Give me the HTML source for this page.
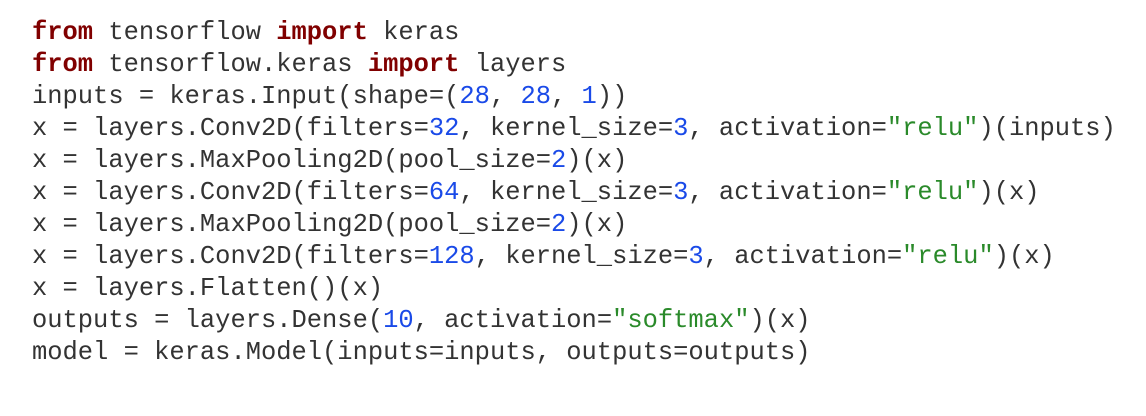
<!DOCTYPE html>
<html><head><style>
body{margin:0;background:#fff;width:1146px;height:416px;overflow:hidden}
pre{margin:0;position:absolute;left:32px;top:17px;font-family:"Liberation Mono",monospace;font-size:25.45px;line-height:32px;color:#333}
b{color:#800000}
.n{color:#1a4ae8}
.s{color:#2a8a2a}
</style></head><body>
<pre><b>from</b> tensorflow <b>import</b> keras
<b>from</b> tensorflow.keras <b>import</b> layers
inputs = keras.Input(shape=(<span class="n">28</span>, <span class="n">28</span>, <span class="n">1</span>))
x = layers.Conv2D(filters=<span class="n">32</span>, kernel_size=<span class="n">3</span>, activation=<span class="s">"relu"</span>)(inputs)
x = layers.MaxPooling2D(pool_size=<span class="n">2</span>)(x)
x = layers.Conv2D(filters=<span class="n">64</span>, kernel_size=<span class="n">3</span>, activation=<span class="s">"relu"</span>)(x)
x = layers.MaxPooling2D(pool_size=<span class="n">2</span>)(x)
x = layers.Conv2D(filters=<span class="n">128</span>, kernel_size=<span class="n">3</span>, activation=<span class="s">"relu"</span>)(x)
x = layers.Flatten()(x)
outputs = layers.Dense(<span class="n">10</span>, activation=<span class="s">"softmax"</span>)(x)
model = keras.Model(inputs=inputs, outputs=outputs)</pre>
</body></html>
